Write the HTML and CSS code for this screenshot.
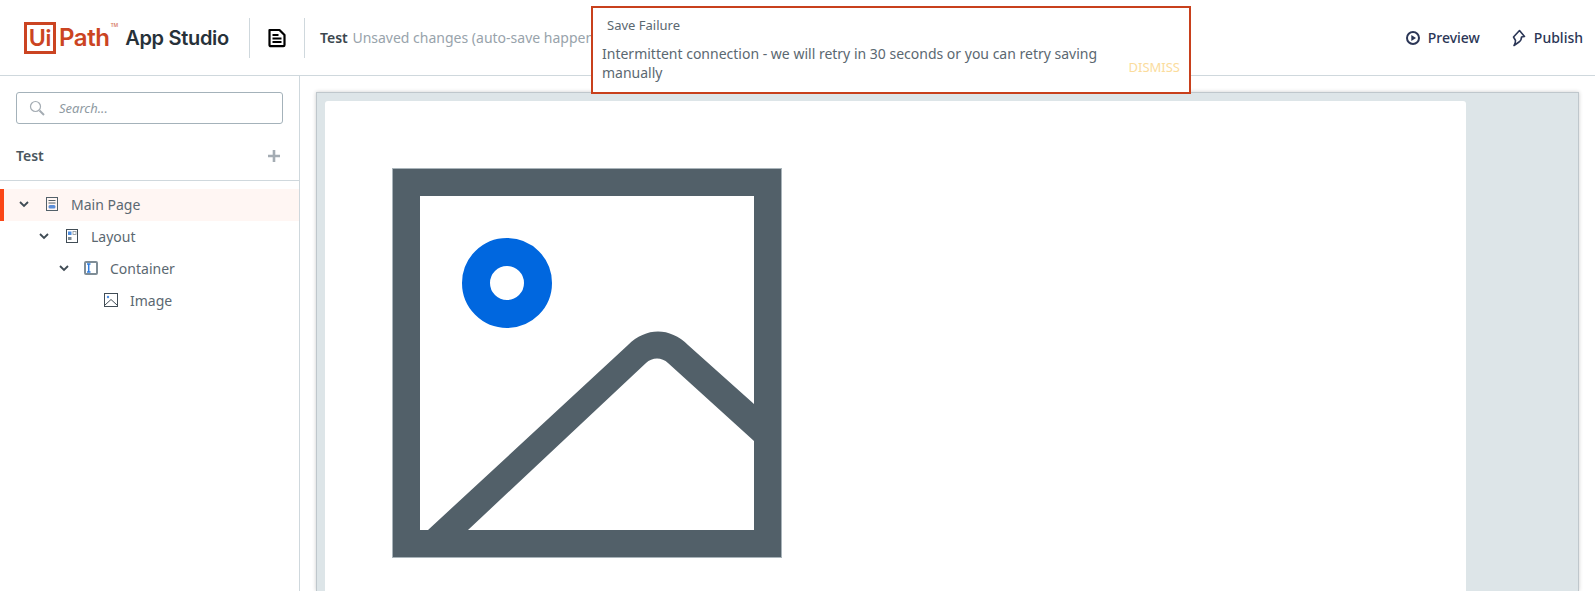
FILE: index.html
```html
<!DOCTYPE html>
<html lang="en">
<head>
  <meta charset="UTF-8">
  <title>UiPath App Studio</title>
  <link rel="stylesheet" href="styles.css">
</head>
<body>
  <header class="topbar">
    <div class="logo">
      <span class="logo-box">Ui</span>
      <span class="logo-path">Path</span>
      <span class="logo-tm">TM</span>
      <span class="logo-app">App Studio</span>
    </div>
    <div class="doc-btn">
      <svg width="20" height="20" viewBox="0 0 20 20" fill="none" stroke="#000" stroke-width="2.200">
        <path d="M2.500 2h10l5 5v10a1.200 1.200 0 0 1-1.200 1.200H3.700A1.200 1.200 0 0 1 2.500 17z" stroke-linejoin="round"/>
        <path d="M5.500 7h6M5.500 10.500h9M5.500 14h9" stroke-width="1.800"/>
      </svg>
    </div>
    <div class="title-area">
      <span class="app-name">Test</span>
      <span class="save-state">Unsaved changes (auto-save happens</span>
    </div>
    <div class="actions">
      <button class="action">
        <svg width="16" height="16" viewBox="0 0 16 16">
          <circle cx="8" cy="8" r="6" fill="none" stroke="#2b3656" stroke-width="2"/>
          <path d="M6.300 5l4.700 3-4.700 3z" fill="#2b3656"/>
        </svg>
        Preview
      </button>
      <button class="action">
        <svg width="16" height="20" viewBox="0 0 16 20" fill="none" stroke="#2b3656" stroke-width="1.600">
          <path d="M8.500 2.500l5 6-3 .5c0 2.500-1 4-2.500 5L3 17.500c1.200-1.500 1.500-3 1.500-5L2.500 9z" stroke-linejoin="round"/>
        </svg>
        Publish
      </button>
    </div>
  </header>

  <div class="toast">
    <div class="toast-title">Save Failure</div>
    <div class="toast-body">
      <p class="toast-msg">Intermittent connection - we will retry in 30 seconds or you can retry saving manually</p>
      <span class="toast-dismiss">DISMISS</span>
    </div>
  </div>

  <div class="main">
    <aside class="sidebar">
      <div class="search">
        <svg width="18" height="18" viewBox="0 0 18 18" fill="none" stroke="#a4acb3" stroke-width="1.200">
          <circle cx="7.500" cy="7.500" r="5"/>
          <path d="M11.500 11.500l4.500 4.500" stroke-width="2"/>
        </svg>
        <span class="search-text">Search...</span>
      </div>
      <div class="side-head">
        <span>Test</span>
        <svg width="12" height="12" viewBox="0 0 12 12"><path d="M6 0v12M0 6h12" stroke="#a4acb3" stroke-width="2.600"/></svg>
      </div>
      <ul class="tree">
        <li class="row selected lvl0">
          <svg class="chev" width="10" height="7" viewBox="0 0 10 7"><path d="M1 1l4 4 4-4" fill="none" stroke="#3f4b54" stroke-width="1.800"/></svg>
          <svg class="node" width="14" height="14" viewBox="0 0 14 14">
            <rect x="1.500" y=".5" width="11" height="13" fill="none" stroke="#526069"/>
            <path d="M3.500 3.500h7M3.500 6h7" stroke="#526069"/>
            <rect x="3.500" y="8" width="7" height="3.500" rx="1.500" fill="#5c8ed8"/>
          </svg>
          Main Page
        </li>
        <li class="row lvl1">
          <svg class="chev" width="10" height="7" viewBox="0 0 10 7"><path d="M1 1l4 4 4-4" fill="none" stroke="#3f4b54" stroke-width="1.800"/></svg>
          <svg class="node" width="14" height="14" viewBox="0 0 14 14">
            <rect x="1.500" y=".5" width="11" height="13" fill="none" stroke="#414d56"/>
            <rect x="3" y="2.500" width="3.500" height="3.500" fill="#4d8de0"/>
            <rect x="8" y="2.500" width="3" height="3" fill="none" stroke="#8a959c" stroke-width=".8"/>
            <rect x="3" y="8" width="3.500" height="3" fill="#7c8992"/>
          </svg>
          Layout
        </li>
        <li class="row lvl2">
          <svg class="chev" width="10" height="7" viewBox="0 0 10 7"><path d="M1 1l4 4 4-4" fill="none" stroke="#3f4b54" stroke-width="1.800"/></svg>
          <svg class="node" width="14" height="14" viewBox="0 0 14 14">
            <rect x="1" y="1" width="12" height="12" rx="1" fill="none" stroke="#7f8d96" stroke-width="2"/>
            <path d="M3 3h3.500M3 11h3.500M4.700 3v8" fill="none" stroke="#2f7de0" stroke-width="1.500"/>
          </svg>
          Container
        </li>
        <li class="row lvl3">
          <span class="chev-gap"></span>
          <svg class="node" width="14" height="14" viewBox="0 0 14 14" fill="none" stroke="#414d56">
            <rect x=".5" y=".5" width="13" height="13"/>
            <circle cx="4" cy="4" r="1.200" fill="#4d8de0" stroke="none"/>
            <path d="M1 12l6-5.500 6 5.500"/>
          </svg>
          Image
        </li>
      </ul>
    </aside>

    <section class="canvas">
      <div class="frame">
        <div class="page">
          <svg class="picture" width="390" height="390" viewBox="0 0 390 390">
            <rect x="14" y="14" width="362" height="362" fill="#fff" stroke="#526069" stroke-width="28"/>
            <path d="M36 362L236 177C254 159 278 159 296 177L362 236V273L276 195C270 189 260 189 254 195L76 362z" fill="#526069"/>
            <circle cx="115" cy="115" r="31" fill="none" stroke="#0067df" stroke-width="28"/>
            <rect x=".5" y=".5" width="389" height="389" fill="none" stroke="#a9b4ba"/>
          </svg>
        </div>
      </div>
    </section>
  </div>
</body>
</html>
```

FILE: styles.css
```css
* {
  box-sizing: border-box;
  margin: 0;
  padding: 0;
}

html, body {
  height: 100%;
  overflow: hidden;
}

body {
  font-family: "Noto Sans", sans-serif;
  font-size: 14px;
  color: #5b6871;
  background: #fff;
  position: relative;
}

/* Barra superior */
.topbar {
  height: 76px;
  display: flex;
  align-items: center;
  border-bottom: 1px solid #cfd8dd;
}

.logo {
  width: 250px;
  height: 40px;
  padding-left: 24px;
  display: flex;
  align-items: center;
  border-right: 1px solid #cfd8dd;
}
.logo-box {
  width: 32px;
  height: 32px;
  border: 3.5px solid #cb4422;
  color: #cb4422;
  font-family: "Lato", sans-serif;
  font-size: 23px;
  font-weight: 700;
  line-height: 25px;
  text-align: center;
}
.logo-path {
  margin-left: 3px;
  color: #cb4422;
  font-family: "Inter", sans-serif;
  font-size: 24px;
  font-weight: 600;
  letter-spacing: -0.4px;
}
.logo-tm {
  align-self: flex-start;
  margin: 4px 0 0 1px;
  color: #d77a62;
  font-size: 5px;
  font-weight: 600;
}
.logo-app {
  margin-left: 7px;
  color: #273139;
  font-family: "Inter", sans-serif;
  font-size: 20px;
  font-weight: 600;
  letter-spacing: -0.3px;
}

.doc-btn {
  width: 55px;
  height: 40px;
  display: flex;
  align-items: center;
  justify-content: center;
  border-right: 1px solid #cfd8dd;
}

.title-area {
  width: 287px;
  padding-left: 15px;
  white-space: nowrap;
  overflow: hidden;
}
.app-name {
  color: #3a464e;
  font-weight: 600;
}
.save-state {
  margin-left: 1px;
  color: #98a3ab;
}

.actions {
  margin-left: auto;
  padding-right: 12px;
  display: flex;
  gap: 31px;
}
.action {
  display: flex;
  align-items: center;
  gap: 7px;
  border: none;
  background: none;
  color: #2b3656;
  font-family: inherit;
  font-size: 14px;
  font-weight: 500;
}

/* Aviso de falha */
.toast {
  position: absolute;
  top: 6px;
  left: 591px;
  width: 600px;
  height: 88px;
  background: #fff;
  border: 2px solid #c8401c;
  padding: 7px 9px 0 9px;
  z-index: 5;
}
.toast-title {
  margin-left: 5px;
  font-size: 13px;
  line-height: 20px;
  color: #5b6871;
}
.toast-body {
  display: flex;
  align-items: center;
  margin-top: 9px;
}
.toast-msg {
  flex: 1;
  line-height: 19px;
  padding-right: 20px;
  color: #5b6871;
}
.toast-dismiss {
  margin-top: 7px;
  font-size: 13px;
  color: #fbdc9c;
}

/* Corpo */
.main {
  display: flex;
  height: 515px;
}

.sidebar {
  width: 300px;
  flex-shrink: 0;
  border-right: 1px solid #cfd8dd;
  padding-top: 16px;
}

.search {
  width: 267px;
  height: 32px;
  margin-left: 16px;
  padding-left: 11px;
  display: flex;
  align-items: center;
  border: 1px solid #a4b2ba;
  border-radius: 3px;
}
.search-text {
  margin-left: 13px;
  font-size: 13px;
  font-style: italic;
  color: #8f9aa2;
}

.side-head {
  height: 57px;
  margin-bottom: 8px;
  padding: 7px 19px 0 16px;
  display: flex;
  align-items: center;
  justify-content: space-between;
  border-bottom: 1px solid #cfd8dd;
  color: #4a565e;
  font-weight: 600;
}

.tree {
  list-style: none;
}
.row {
  height: 32px;
  display: flex;
  align-items: center;
  padding-left: 19px;
  padding-bottom: 2px;
}
.lvl1 { padding-left: 39px; }
.lvl2 { padding-left: 59px; }
.lvl3 { padding-left: 78px; }
.selected {
  background: #fff6f3;
  border-left: 4px solid #fa4616;
  padding-left: 15px;
}
.chev {
  margin-right: 16px;
}
.lvl2 .chev {
  margin-right: 15px;
}
.chev-gap {
  width: 26px;
}
.node {
  margin-right: 12px;
}

/* Área de desenho */
.canvas {
  flex: 1;
  padding: 16px 16px 0 16px;
}
.frame {
  height: 100%;
  background: #dde5e8;
  border: 1px solid #bfc7cc;
  border-bottom: none;
  box-shadow: 0 0 4px rgba(0, 0, 0, 0.2);
  padding: 8px 112px 0 8px;
}
.page {
  height: 100%;
  background: #fff;
  border-radius: 3px 3px 0 0;
  padding: 67px 0 0 67px;
}
.picture {
  display: block;
}
```
